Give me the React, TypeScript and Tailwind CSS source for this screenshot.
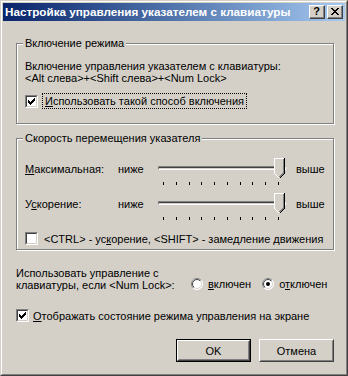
import React from "react";

const FONT = { fontFamily: '"Liberation Sans", Arial, sans-serif' };

function CheckMark() {
  const rows: [number, number, number][] = [
    [6, 0, 1],
    [5, 1, 2],
    [0, 2, 1],
    [4, 2, 3],
    [0, 3, 2],
    [3, 3, 3],
    [0, 4, 5],
    [1, 5, 3],
    [2, 6, 1],
  ];
  return (
    <svg width="7" height="7" viewBox="0 0 7 7" shapeRendering="crispEdges" className="absolute left-[1px] top-[1px]">
      {rows.map(([x, y, w], i) => (
        <rect key={i} x={x} y={y} width={w} height={1} fill="#000" />
      ))}
    </svg>
  );
}

function Check({ checked }: { checked?: boolean }) {
  return (
    <span className="flex-none block w-[13px] h-[13px] bg-white border border-t-[#808080] border-l-[#808080] border-r-white border-b-white">
      <span className="block relative w-[11px] h-[11px] border border-t-[#404040] border-l-[#404040] border-r-[#d4d0c8] border-b-[#d4d0c8]">
        {checked && <CheckMark />}
      </span>
    </span>
  );
}

function Radio({ checked, id }: { checked?: boolean; id: string }) {
  return (
    <svg width="12" height="12" viewBox="0 0 12 12" className="flex-none">
      <defs>
        <linearGradient id={id + "o"} x1="0" y1="0" x2="1" y2="1">
          <stop offset="0.5" stopColor="#808080" />
          <stop offset="0.5" stopColor="#ffffff" />
        </linearGradient>
        <linearGradient id={id + "i"} x1="0" y1="0" x2="1" y2="1">
          <stop offset="0.5" stopColor="#404040" />
          <stop offset="0.5" stopColor="#d4d0c8" />
        </linearGradient>
      </defs>
      <circle cx="6" cy="6" r="5.5" fill="white" stroke={`url(#${id}o)`} strokeWidth="1" />
      <circle cx="6" cy="6" r="4.5" fill="white" stroke={`url(#${id}i)`} strokeWidth="1" />
      {checked && <circle cx="6" cy="6" r="2" fill="#000" />}
    </svg>
  );
}

function Thumb() {
  return (
    <svg width="11" height="21" viewBox="0 0 11 21" shapeRendering="crispEdges" className="absolute left-[116px] top-0">
      <polygon points="0,0 11,0 11,15 5.5,20.5 0,15" fill="#d4d0c8" />
      <polyline points="0.5,15.5 0.5,0.5 10,0.5" fill="none" stroke="#fff" />
      <line x1="0.5" y1="15.5" x2="5" y2="20" stroke="#fff" />
      <polyline points="10.5,0 10.5,15.5 5.5,20.5" fill="none" stroke="#000" />
      <polyline points="9.5,1 9.5,15 5.5,19" fill="none" stroke="#808080" />
    </svg>
  );
}

function Slider() {
  return (
    <div className="relative w-[128px] h-[21px] flex-none">
      <div className="absolute left-0 right-0 top-[8px] h-[4px] border border-t-[#808080] border-l-[#808080] border-r-white border-b-white">
        <div className="h-full border-t border-t-[#404040] bg-[#d4d0c8]" />
      </div>
      <Thumb />
    </div>
  );
}

function Ticks() {
  return (
    <div className="ml-[138px] w-[116px] h-[3px] flex justify-between">
      {Array.from({ length: 10 }).map((_, i) => (
        <span key={i} className="block w-px h-[3px] bg-black" />
      ))}
    </div>
  );
}

function Group({ title, className, children }: { title: string; className?: string; children: React.ReactNode }) {
  return (
    <div
      className={
        "relative border border-[#808080] shadow-[inset_1px_1px_0_#fff,1px_1px_0_#fff] " + (className ?? "")
      }
    >
      <span className="absolute left-[6px] top-[-7px] bg-[#d4d0c8] px-[2px] leading-[12px]">{title}</span>
      {children}
    </div>
  );
}

function Btn({ children, def }: { children: React.ReactNode; def?: boolean }) {
  if (def) {
    return (
      <div className="w-[75px] h-[23px] border border-black flex-none">
        <div className="h-full border border-t-white border-l-white border-r-[#404040] border-b-[#404040]">
          <div className="h-full flex items-center justify-center border border-t-[#d4d0c8] border-l-[#d4d0c8] border-r-[#808080] border-b-[#808080]">
            {children}
          </div>
        </div>
      </div>
    );
  }
  return (
    <div className="w-[75px] h-[23px] flex-none border border-t-white border-l-white border-r-[#404040] border-b-[#404040]">
      <div className="h-full flex items-center justify-center border border-t-[#d4d0c8] border-l-[#d4d0c8] border-r-[#808080] border-b-[#808080]">
        {children}
      </div>
    </div>
  );
}

function CapButton({ children }: { children: React.ReactNode }) {
  return (
    <div className="w-[16px] h-[14px] bg-[#d4d0c8] border border-t-white border-l-white border-r-[#404040] border-b-[#404040] flex-none">
      <div className="h-full flex items-center justify-center border-r border-b border-r-[#808080] border-b-[#808080]">
        {children}
      </div>
    </div>
  );
}

export default function App() {
  return (
    <div
      style={FONT}
      className="w-[348px] h-[376px] bg-[#d4d0c8] text-[11px] leading-[12px] text-black border border-t-[#d4d0c8] border-l-[#d4d0c8] border-r-[#404040] border-b-[#404040] select-none"
    >
      <div className="h-full flex flex-col border border-t-white border-l-white border-r-[#808080] border-b-[#808080] p-px">
        {/* Title bar */}
        <div className="h-[18px] flex items-center pl-[2px] pr-[2px] bg-gradient-to-r from-[#0a246a] to-[#a6caf0]">
          <span className="font-bold text-white text-[11.7px] flex-1 whitespace-nowrap">
            Настройка управления указателем с клавиатуры
          </span>
          <div className="flex gap-[2px]">
            <CapButton>
              <span className="font-bold text-[11px] leading-[11px] text-black">?</span>
            </CapButton>
            <CapButton>
              <svg width="8" height="7" viewBox="0 0 8 7" shapeRendering="crispEdges">
                <path d="M0 0h2v1H0zM6 0h2v1H6zM1 1h2v1H1zM5 1h2v1H5zM2 2h4v1H2zM3 3h2v1H3zM2 4h4v1H2zM1 5h2v1H1zM5 5h2v1H5zM0 6h2v1H0zM6 6h2v1H6z" fill="#000" />
              </svg>
            </CapButton>
          </div>
        </div>

        {/* Body */}
        <div className="flex-1 flex flex-col pl-[13px] pr-[11px] pt-[22px]">
          <Group title="Включение режима" className="h-[81px] pl-[8px] pt-[16px]">
            <div>Включение управления указателем с клавиатуры:</div>
            <div>&lt;Alt слева&gt;+&lt;Shift слева&gt;+&lt;Num Lock&gt;</div>
            <div className="mt-[9px] flex items-center gap-[4px]">
              <Check checked />
              <span className="border border-dotted border-black px-[2px] py-[1px]">
                <u>И</u>спользовать такой способ включения
              </span>
            </div>
          </Group>

          <Group title="Скорость перемещения указателя" className="mt-[14px] h-[112px] pl-[8px] pt-[19px]">
            <div className="flex items-center">
              <span className="w-[93px]">
                <u>М</u>аксимальная:
              </span>
              <span className="w-[40px]">ниже</span>
              <Slider />
              <span className="ml-[10px]">выше</span>
            </div>
            <div className="mt-[3px]">
              <Ticks />
            </div>
            <div className="flex items-center mt-[8px]">
              <span className="w-[93px]">
                У<u>с</u>корение:
              </span>
              <span className="w-[40px]">ниже</span>
              <Slider />
              <span className="ml-[10px]">выше</span>
            </div>
            <div className="mt-[3px]">
              <Ticks />
            </div>
            <div className="mt-[12px] flex items-center gap-[6px]">
              <Check />
              <span>
                &lt;CTRL&gt; - ус<u>к</u>орение, &lt;SHIFT&gt; - замедление движения
              </span>
            </div>
          </Group>

          <div className="mt-[17px] flex items-end">
            <div className="w-[175px] flex-none">
              <div>Использовать управление с</div>
              <div>клавиатуры, если &lt;Num Lock&gt;:</div>
            </div>
            <div className="flex items-center mb-[1px] h-[12px]">
              <Radio id="r1" />
              <span className="ml-[5px]">
                <u>в</u>ключен
              </span>
              <span className="ml-[11px] flex items-center">
                <Radio id="r2" checked />
              </span>
              <span className="ml-[5px]">
                о<u>т</u>ключен
              </span>
            </div>
          </div>

          <div className="mt-[18px] flex items-center gap-[4px]">
            <Check checked />
            <span>
              <u>О</u>тображать состояние режима управления на экране
            </span>
          </div>

          <div className="mt-[17px] flex justify-end gap-[8px]">
            <Btn def>OK</Btn>
            <Btn>Отмена</Btn>
          </div>
        </div>
      </div>
    </div>
  );
}
